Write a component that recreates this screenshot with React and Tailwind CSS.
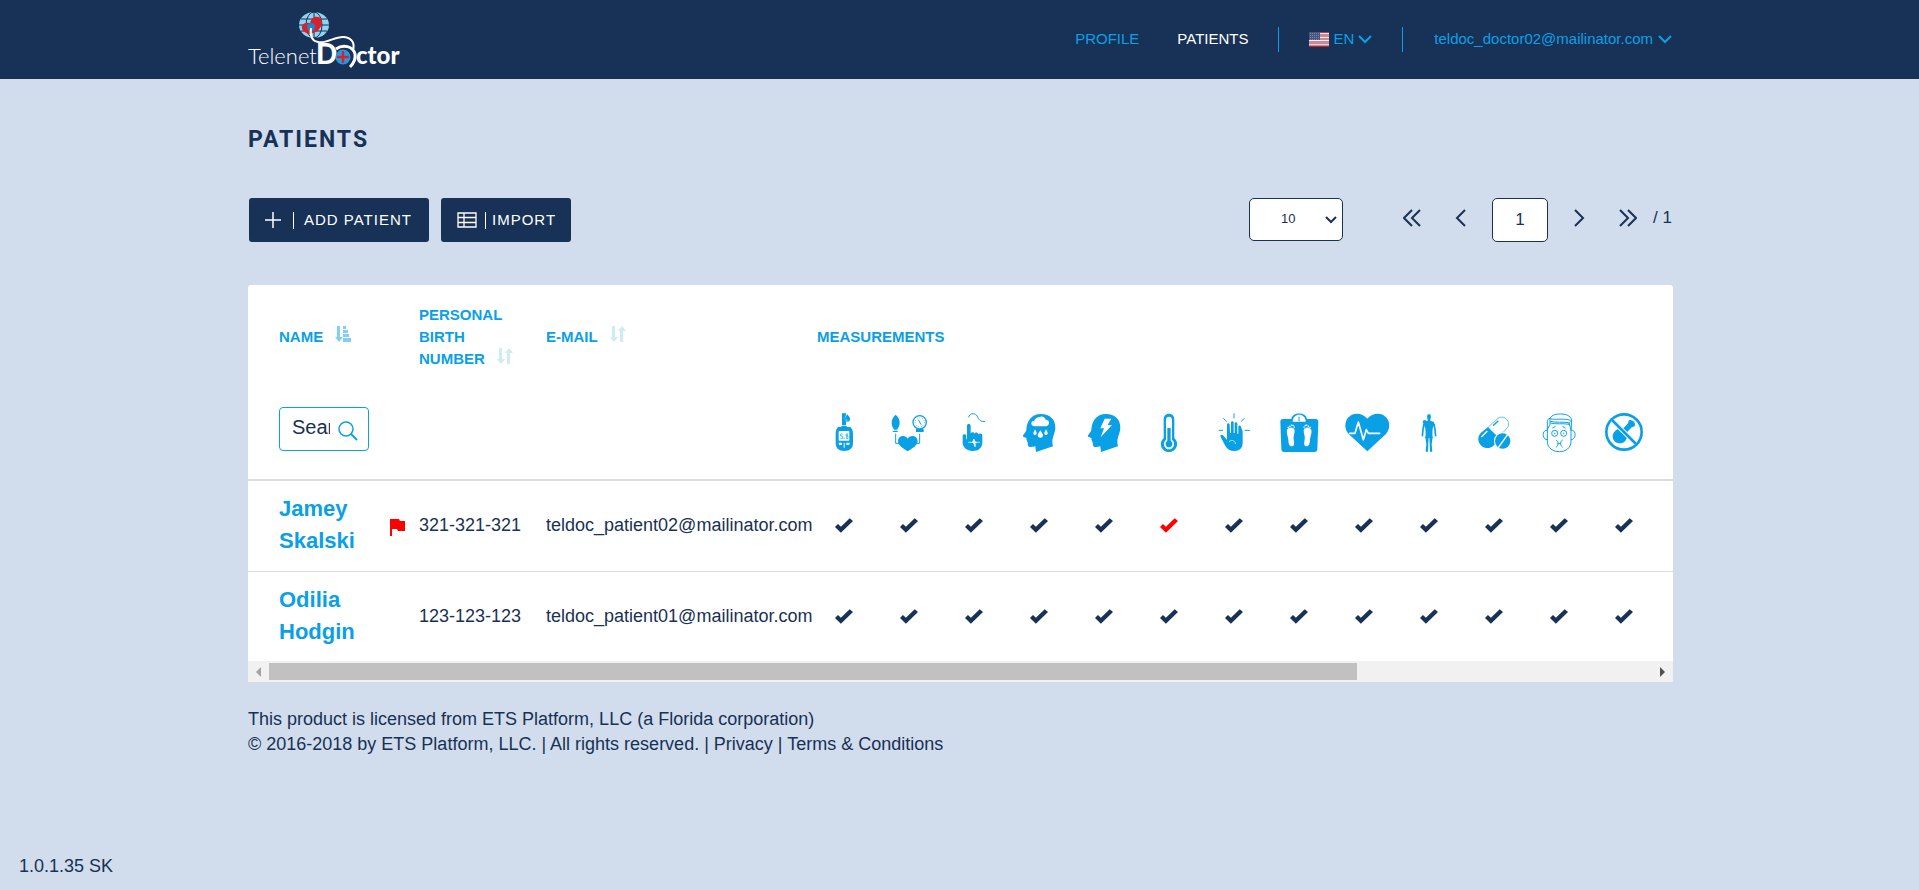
import React, { useState } from "react";

const FlagUS = () => (
  <svg viewBox="0 0 20 15" className="w-5 h-[15px]" aria-hidden="true">
    <rect width="20" height="15" fill="#c98a98" />
    <rect width="20" height="1" fill="#c8374a" />
    <rect y="14" width="20" height="1" fill="#c8202f" />
    <g fill="#f2eef2">
      <rect x="11" y="1" width="9" height="1" />
      <rect x="11" y="5" width="9" height="1" />
      <rect y="8" width="20" height="1" />
      <rect y="12" width="20" height="1" opacity="0.7" />
    </g>
    <rect width="11" height="8" fill="#46567c" />
    <g fill="#9aa5bd">
      {[1, 3, 5, 7].map((y) =>
        [1, 3, 5, 7, 9].map((x) => <rect key={`${x}-${y}`} x={x} y={y} width="1" height="1" opacity="0.6" />)
      )}
    </g>
  </svg>
);

const ChevronDown = () => (
  <svg viewBox="0 0 14 9" className="w-3.5 h-[9px]" fill="none" stroke="currentColor" strokeWidth="2" aria-hidden="true">
    <path d="M1 1l6 6 6-6" />
  </svg>
);

const Logo = () => (
  <svg viewBox="0 0 156 60" className="w-[156px] h-[60px] overflow-visible" role="img" aria-label="Telenet Doctor">
    <ellipse cx="66" cy="13" rx="15" ry="13" fill="#8fd3f0" />
    <g fill="none" stroke="#183156" strokeWidth="1">
      <path d="M66 0v26M51 13h30M53 7h26M53 19h26" />
      <ellipse cx="66" cy="13" rx="8" ry="13" />
    </g>
    <path
      d="M61 22c-4-1-8-4-7-8 1-3 5-4 8-3 1-4 4-7 8-6 5 1 5 7 2 11-2 3-5 5-11 6z"
      fill="#dc1f2d"
    />
    <circle cx="63" cy="15" r="4" fill="#1588cf" />
    <path
      d="M63 16c-1 7 0 13 7 14 9 2 17-6 26-5 8 1 11 6 9 13"
      fill="none"
      stroke="#fff"
      strokeWidth="2"
    />
    <text x="0" y="52" fill="#fff" className="font-[Lato] font-light text-[22px]">Telenet</text>
    <text x="68" y="52" fill="#fff" className="font-[Lato] font-black text-[28px]">D</text>
    <path d="M88 37c7-5 17-3 19 5 1 6-2 10-5 13" fill="none" stroke="#fff" strokeWidth="3" />
    <circle cx="95" cy="45" r="7.500" fill="#1f9be0" />
    <path d="M95 39v12M89 45h12" stroke="#dc1f2d" strokeWidth="2.400" />
    <text x="108" y="52" fill="#fff" className="font-[Lato] font-black text-[24px]">ctor</text>
  </svg>
);

const headPath =
  "M72 9c26 0 43 16 43 40 0 18-9 28-9 44 0 5 1 9 2 13l-51 17-2-17c-6 1-14 3-19 1-5-2-3-9-4-13-1-3-3-4-2-7-3-1-2-4-1-6-3-1-10-2-11-5-1-4 9-13 10-19 1-26 15-48 44-48z";

const icons = {
  glucose: (
    <>
      <path d="M48 48h9l3-3h13l3 3h9c6 5 8 12 8 22v26c0 16-10 24-26 24s-26-8-26-24V70c0-10 2-17 7-22z" />
      <rect x="50" y="60" width="32" height="29" rx="2" fill="#fff" />
      <g fill="none" stroke="currentColor" strokeWidth="2">
        <path d="M62 69h-6v6h6v7h-7M78 69h-6v6h6v7h-6z" />
      </g>
      <rect x="65" y="80" width="3" height="3" />
      <path d="M49 95h11v7h-8zM73 95h11l-3 7h-8zM65 95h3v15h-3z" fill="#fff" />
      <path d="M60 7h12v5l-4 10 4 8v13H60z" />
      <path d="M76 10c5 6 9 10 8 16-1 5-9 9-14 4-3-5-1-12 6-20z" />
      <path d="M72 24c0 4 2 6 5 6" fill="none" stroke="#fff" strokeWidth="1.500" />
    </>
  ),
  pressure: (
    <>
      <path d="M26 11c8 7 12 15 12 24 0 9-4 15-8 21h-8c-5-6-8-12-8-21 0-9 4-17 12-24z" />
      <path d="M20 59h12v4H16z" />
      <circle cx="98" cy="34" r="20" fill="none" stroke="currentColor" strokeWidth="4" />
      <circle cx="98" cy="34" r="14" fill="none" stroke="currentColor" strokeWidth="3" strokeDasharray="2 6" />
      <path d="M94 26l8 15" stroke="currentColor" strokeWidth="3" />
      <rect x="87" y="54" width="23" height="9" />
      <path d="M26 68v29h12M98 68v29H86" fill="none" stroke="currentColor" strokeWidth="3" />
      <path d="M62 121C50 113 33 104 33 90c0-15 21-21 29-7 8-14 30-8 30 7 0 14-18 23-30 31z" />
    </>
  ),
  pulse: (
    <>
      <path d="M50 19C51 8 66 5 73 12c7 8 7 22 26 19" fill="none" stroke="currentColor" strokeWidth="3" />
      <path d="M45 45c0-8 11-8 11 0v22c3-5 10-4 11 1 3-5 10-4 12 2 4-5 12-3 12 4v19c0 18-12 27-29 27-18 0-30-10-30-26V74c0-6 10-6 11 0v11h2z" />
      <path d="M48 94h14l3-10 4 24 3-14h12" fill="none" stroke="#fff" strokeWidth="2" />
      <path d="M57 94l7-3 3-8 2 8 7 3-7 3-2 9-3-9z" fill="#fff" />
    </>
  ),
  depression: (
    <>
      <path d={headPath} />
      <path
        d="M54 46c-7 0-11-4-11-9s4-8 9-8c2-7 8-11 19-12 3-2 12-1 15 9 7 0 11 5 10 11-1 6-5 9-10 9z"
        fill="#fff"
      />
      <path
        d="M54 55c3 5 5 8 5 12 0 7-10 7-10 0 0-4 3-7 5-12zM70 58c4 7 8 11 8 15 0 10-16 10-16 0 0-4 4-8 8-15zM87 55c3 5 5 8 5 12 0 7-10 7-10 0 0-4 3-7 5-12z"
        fill="#fff"
      />
    </>
  ),
  stress: (
    <>
      <path d={headPath} />
      <path d="M68 23h20L77 42h13L56 79l10-27H55z" fill="#fff" />
    </>
  ),
  temperature: (
    <>
      <path d="M50 25c0-22 32-22 32 0v56c18 18 4 42-16 42S32 99 50 81z" />
      <path d="M57 26c0-12 18-12 18 0v60c13 11 4 29-9 29s-22-18-9-29z" fill="#fff" />
      <path d="M61 51h10v38c10 7 4 20-5 20s-15-13-5-20z" />
    </>
  ),
  pain: (
    <>
      <path d="M45 41c0-6 7-6 8 0l1 25h3V35c0-6 8-6 8 0v31h3V38c0-6 8-6 8 0v30h3V48c0-6 7-6 8 0l5 13v35c0 16-10 24-25 24-12 0-22-6-27-15L26 78c-3-6 3-9 7-5l12 13z" />
      <path d="M51 92c8-7 20-3 19 7" fill="none" stroke="#fff" strokeWidth="2" />
      <path
        d="M66 7v15M34 22l10 10M97 22L87 32M20 58h13M98 58h16"
        fill="none"
        stroke="currentColor"
        strokeWidth="3"
      />
    </>
  ),
  weight: (
    <>
      <path d="M18 24h25c3-22 44-22 47 0h26c6 0 8 4 8 9l-3 82c0 5-3 8-9 8H22c-6 0-9-3-9-9l-3-81c0-5 2-9 8-9z" />
      <path d="M47 32c0-28 39-28 39 0z" fill="#fff" />
      <path d="M66 17v14" stroke="currentColor" strokeWidth="3" />
      <path
        d="M30 57c2-9 22-11 23 2 0 10-5 16-3 26 1 8 4 20-4 21-10 1-11-9-12-19-1-13-6-18-4-30zM103 57c-2-9-22-11-23 2 0 10 5 16 3 26-1 8-4 20 4 21 10 1 11-9 12-19 1-13 6-18 4-30z"
        fill="#fff"
      />
      <path d="M32 50l14-9 7 9M101 50l-14-9-7 9" stroke="#fff" strokeWidth="4" fill="none" strokeDasharray="4 2" />
    </>
  ),
  heart: (
    <>
      <path d="M76 121L20 69C-2 42 16 8 44 8c14 0 25 6 32 15C83 14 94 8 108 8c28 0 46 34 24 61z" />
      <path
        d="M23 67h16l10-34 15 53 9-30 6 11h34"
        fill="none"
        stroke="#fff"
        strokeWidth="5"
        strokeLinecap="round"
        strokeLinejoin="round"
      />
    </>
  ),
  body: (
    <>
      <ellipse cx="66" cy="17" rx="6" ry="8" />
      <path d="M62 22h8v7l11 4v8l-4 12-1 14 1 14H55l1-14-1-14-4-12v-8l11-4z" />
      <path d="M51 38l-3 18-2 20M81 38l3 18 2 20" fill="none" stroke="currentColor" strokeWidth="5" />
      <path d="M55 78h10l-1 20-1 24h-7l2-22zM77 78H67l1 20 1 24h7l-2-22z" />
      <circle cx="53" cy="33" r="6" />
    </>
  ),
  pills: (
    <>
      <path d="M49 48l26-24c8-7 20-8 28 0 8 8 9 20 1 29L80 78" fill="none" stroke="currentColor" strokeWidth="2" />
      <path d="M48 48l33 33-14 20c-9 11-27 14-38 4-13-11-13-29-2-40z" />
      <path d="M28 78l18-18" stroke="#fff" strokeWidth="4" />
      <path d="M63 44l16-15" stroke="currentColor" strokeWidth="4" />
      <circle cx="92" cy="90" r="26" fill="#fff" />
      <circle cx="92" cy="90" r="23" />
      <path d="M78 111l31-43" stroke="#fff" strokeWidth="4" />
    </>
  ),
  face: (
    <g fill="none" stroke="currentColor" strokeWidth="3">
      <path d="M31 55v36c0 20 17 31 36 31s35-11 35-31V55" />
      <path d="M31 57V32c0-6 3-9 8-10 6-11 19-13 32-13 20 0 34 8 33 23l-2 26M39 22v18l-8 16M96 36l6 20" />
      <path d="M39 22c5 5 30 1 48 3 8 1 14 2 17 9M40 31c18 5 38 0 60 5M40 36c18 5 36 0 57 4" />
      <path d="M31 58c-17-2-16 28 0 28M102 58c17-2 16 28 0 28" />
      <circle cx="53" cy="67" r="9" />
      <circle cx="80" cy="67" r="9" />
      <circle cx="53" cy="67" r="1" />
      <circle cx="80" cy="67" r="1" />
      <path d="M46 51c3-1 8-2 9-6M86 51c-3-1-8-2-9-6M57 87c8 3 8 16 0 22M77 87c-8 3-8 16 0 22M62 98h10" />
    </g>
  ),
  allergy: (
    <>
      <circle cx="66" cy="63" r="53" fill="none" stroke="currentColor" strokeWidth="8" />
      <path d="M66 50l13-15c-1-7 4-9 9-7 5 1 10 6 11 10 2 6-3 10-9 10L76 62c2 20-6 35-23 35-18 0-27-19-17-33 7-10 18-14 30-14z" />
      <path d="M31 28l70 70" stroke="#fff" strokeWidth="14" />
      <path d="M27 24l78 78" stroke="currentColor" strokeWidth="8" />
    </>
  ),
};

const measurements = [
  { key: "glucose", label: "Glucose" },
  { key: "pressure", label: "Blood pressure" },
  { key: "pulse", label: "Pulse" },
  { key: "depression", label: "Depression" },
  { key: "stress", label: "Stress" },
  { key: "temperature", label: "Temperature" },
  { key: "pain", label: "Pain" },
  { key: "weight", label: "Weight" },
  { key: "heart", label: "Heart rate" },
  { key: "body", label: "Body" },
  { key: "pills", label: "Medication" },
  { key: "face", label: "Nausea" },
  { key: "allergy", label: "Appetite" },
];

const patients = [
  {
    name: "Jamey Skalski",
    birthNumber: "321-321-321",
    email: "teldoc_patient02@mailinator.com",
    flagged: true,
    alerts: ["temperature"],
  },
  {
    name: "Odilia Hodgin",
    birthNumber: "123-123-123",
    email: "teldoc_patient01@mailinator.com",
    flagged: false,
    alerts: [],
  },
];

const Check = ({ alert }) => (
  <svg
    viewBox="0 0 55 45"
    className={`w-[18px] h-[15px] mx-auto ${alert ? "text-[#ff0000]" : "text-[#183156]"}`}
    fill="currentColor"
    aria-label={alert ? "alert" : "ok"}
  >
    <path d="M0 27l9-9 9 8L45 0l10 9-37 36z" />
  </svg>
);

const SortBoth = () => (
  <svg viewBox="0 0 16 16" className="inline-block w-4 h-4 opacity-20 align-baseline" fill="currentColor" aria-hidden="true">
    <path d="M2 0h3v11h3l-4 5-4-5h2zM10 16V5H8l4-5 4 5h-3v11z" />
  </svg>
);

const SortAsc = () => (
  <svg viewBox="0 0 16 16" className="inline-block w-4 h-4 opacity-50 align-baseline" fill="currentColor" aria-hidden="true">
    <path d="M2 0h3v11h3l-4 5-4-5h2zM8 0h3v3H8zM8 4h5v3H8zM8 8h6v3H8zM8 12h8v4H8z" />
  </svg>
);

const PagerButton = ({ label, d, className = "" }) => (
  <button type="button" aria-label={label} className={`h-10 ${className}`}>
    <svg viewBox="0 0 18 18" className="w-[18px] h-[18px]" fill="none" stroke="currentColor" strokeWidth="2">
      <path d={d} />
    </svg>
  </button>
);

const Header = () => (
  <header className="bg-[#183156] h-[79px]">
    <div className="w-full max-w-[1427px] mx-auto pl-0.5 pr-px h-full flex items-center justify-between">
      <a href="#" className="mt-1">
        <Logo />
      </a>
      <nav className="flex items-center text-[15px] text-[#0aa0e6]">
        <a href="#">PROFILE</a>
        <a href="#" className="text-white ml-[38px]">PATIENTS</a>
        <span className="w-px h-[25px] bg-[#0aa0e6] ml-[30px]" />
        <button type="button" className="flex items-center gap-1 ml-[30px]">
          <FlagUS />
          <span>EN</span>
          <ChevronDown />
        </button>
        <span className="w-px h-[25px] bg-[#0aa0e6] ml-[30px]" />
        <button type="button" className="flex items-center gap-[5px] ml-[31px]">
          <span>teldoc_doctor02@mailinator.com</span>
          <ChevronDown />
        </button>
      </nav>
    </div>
  </header>
);

const App = () => {
  const [pageSize, setPageSize] = useState("10");
  const [page, setPage] = useState("1");
  const [search, setSearch] = useState("");

  return (
    <div className="min-h-screen flex flex-col bg-[#d1ddec] text-[#183156] font-['Liberation_Sans',Arial,sans-serif]">
      <Header />

      <main className="w-full max-w-[1427px] mx-auto pl-0.5">
        <h1 className="mt-[45px] text-[23px] leading-8 font-bold tracking-[2px] font-[Roboto]">PATIENTS</h1>

        {/* Toolbar */}
        <div className="mt-[42px] flex items-start justify-between">
          <div className="flex gap-3 pl-px text-[15px] tracking-[1px] text-white">
            <button type="button" className="h-11 w-[180px] pl-4 flex items-center bg-[#183156] rounded-[3px]">
              <svg viewBox="0 0 16 16" className="w-4 h-4" stroke="currentColor" fill="none" aria-hidden="true">
                <path d="M8 0v16M0 8h16" strokeWidth="1.500" />
              </svg>
              <span className="w-px h-[17px] bg-white ml-3 mr-2.5" />
              ADD PATIENT
            </button>
            <button type="button" className="h-11 w-[130px] pl-4 flex items-center bg-[#183156] rounded-[3px]">
              <svg viewBox="0 0 20 16" className="w-5 h-4" stroke="currentColor" fill="none" aria-hidden="true">
                <path d="M1 1h18v14H1zM1 5.500h18M1 10.500h18M7 1v14" strokeWidth="1.300" />
              </svg>
              <span className="w-px h-[17px] bg-white ml-2 mr-1.5" />
              IMPORT
            </button>
          </div>

          <div className="flex items-start pr-px">
            <div className="relative mr-[60px]">
              <select
                aria-label="Rows per page"
                value={pageSize}
                onChange={(e) => setPageSize(e.target.value)}
                className="appearance-none w-[94px] h-[43px] pl-[31px] pb-0.5 bg-white border border-[#183156] rounded-[5px] text-[13px]"
              >
                <option value="10">10</option>
                <option value="25">25</option>
                <option value="50">50</option>
              </select>
              <svg
                viewBox="0 0 12 8"
                className="absolute right-1.5 top-[18px] w-3 h-2 pointer-events-none"
                fill="none"
                stroke="currentColor"
                strokeWidth="2"
                aria-hidden="true"
              >
                <path d="M1 1l5 5 5-5" />
              </svg>
            </div>
            <PagerButton label="First page" d="M9 1L1 9l8 8M17 1L9 9l8 8" />
            <PagerButton label="Previous page" d="M13 1L5 9l8 8" className="ml-[31px]" />
            <input
              type="text"
              aria-label="Page"
              value={page}
              onChange={(e) => setPage(e.target.value)}
              className="w-14 h-11 mx-[22px] bg-white border border-[#183156] rounded-[5px] text-center text-[17px]"
            />
            <PagerButton label="Next page" d="M5 1l8 8-8 8" />
            <PagerButton label="Last page" d="M1 1l8 8-8 8M9 1l8 8-8 8" className="ml-[31px]" />
            <span className="ml-4 text-[17px] leading-10">/ 1</span>
          </div>
        </div>

        {/* Patients table */}
        <div className="mt-[43px] bg-white rounded-t-[3px] overflow-hidden">
          <table className="table-fixed w-full border-collapse text-left">
            <colgroup>
              <col className="w-[171px]" />
              <col className="w-[127px]" />
              <col className="w-[265px]" />
              {measurements.map((m) => (
                <col key={m.key} className="w-[65px]" />
              ))}
              <col />
            </colgroup>
            <thead className="text-[15px] leading-[22px] text-[#0aa0e6]">
              <tr className="h-[103px]">
                <th className="pl-[31px]">
                  NAME <span className="ml-2"><SortAsc /></span>
                </th>
                <th>
                  PERSONAL
                  <br />
                  BIRTH
                  <br />
                  NUMBER <span className="ml-2"><SortBoth /></span>
                </th>
                <th>
                  E-MAIL <span className="ml-2"><SortBoth /></span>
                </th>
                <th colSpan={14} className="pl-1.5">MEASUREMENTS</th>
              </tr>
              <tr className="h-[92px] border-b-2 border-[#dcdcdc]">
                <td className="pl-[31px] pt-[19px] align-top">
                  <div className="flex items-center w-[90px] h-11 pl-3 border border-[#0aa0e6] rounded">
                    <input
                      type="text"
                      aria-label="Search by name"
                      placeholder="Search"
                      value={search}
                      onChange={(e) => setSearch(e.target.value)}
                      className="w-[38px] pb-1 text-[20px] text-[#183156] placeholder:text-[#183156] outline-none"
                    />
                    <svg viewBox="0 0 20 20" className="w-5 h-5 ml-2 mt-1" fill="none" stroke="currentColor" strokeWidth="1.500" aria-hidden="true">
                      <circle cx="8" cy="8" r="7" />
                      <path d="M13 13l6 6" strokeWidth="2" />
                    </svg>
                  </div>
                </td>
                <td />
                <td />
                {measurements.map((m) => (
                  <td key={m.key} className="pt-[23px] align-top">
                    <svg
                      viewBox="0 0 132 126"
                      className="w-11 h-[42px] mx-auto overflow-visible"
                      fill="currentColor"
                      role="img"
                      aria-label={m.label}
                    >
                      {icons[m.key]}
                    </svg>
                  </td>
                ))}
                <td />
              </tr>
            </thead>
            <tbody className="text-[18px]">
              {patients.map((p) => (
                <tr key={p.email} className="h-[91px] last:h-[90px] border-b border-[#dcdcdc] last:border-b-0">
                  <td className="pl-[31px]">
                    <div className="flex items-center">
                      <a href="#" className="w-[111px] pr-5 pb-px text-[22px] leading-8 font-bold text-[#0aa0e6]">
                        {p.name}
                      </a>
                      {p.flagged && (
                        <svg viewBox="0 0 15 17" className="w-[15px] h-[17px] mt-1" fill="#ff0000" aria-label="flagged">
                          <path d="M0 0h9l1 2h5v10H8L7 10H2v7H0z" />
                        </svg>
                      )}
                    </div>
                  </td>
                  <td>{p.birthNumber}</td>
                  <td>{p.email}</td>
                  {measurements.map((m) => (
                    <td key={m.key}>
                      <Check alert={p.alerts.includes(m.key)} />
                    </td>
                  ))}
                  <td />
                </tr>
              ))}
            </tbody>
          </table>

          {/* Horizontal scroll track */}
          <div className="flex items-center h-[21px] bg-[#f1f1f1]">
            <div className="w-[21px] shrink-0 flex justify-center">
              <svg viewBox="0 0 5 10" className="w-[5px] h-[10px]" fill="#a3a3a3" aria-hidden="true">
                <path d="M5 0v10L0 5z" />
              </svg>
            </div>
            <div className="grow">
              <div className="w-[78.7%] h-[17px] bg-[#c1c1c1]" />
            </div>
            <div className="w-[21px] shrink-0 flex justify-center">
              <svg viewBox="0 0 5 10" className="w-[5px] h-[10px]" fill="#505050" aria-hidden="true">
                <path d="M0 0v10l5-5z" />
              </svg>
            </div>
          </div>
        </div>

        <footer className="mt-[25px] text-[18px] leading-[25px]">
          <p>This product is licensed from ETS Platform, LLC (a Florida corporation)</p>
          <p>
            © 2016-2018 by ETS Platform, LLC. | All rights reserved. | <a href="#">Privacy</a> |{" "}
            <a href="#">Terms &amp; Conditions</a>
          </p>
        </footer>
      </main>

      <div className="mt-auto pl-[19px] pb-3 text-[18px] leading-6">1.0.1.35 SK</div>
    </div>
  );
};

export default App;
